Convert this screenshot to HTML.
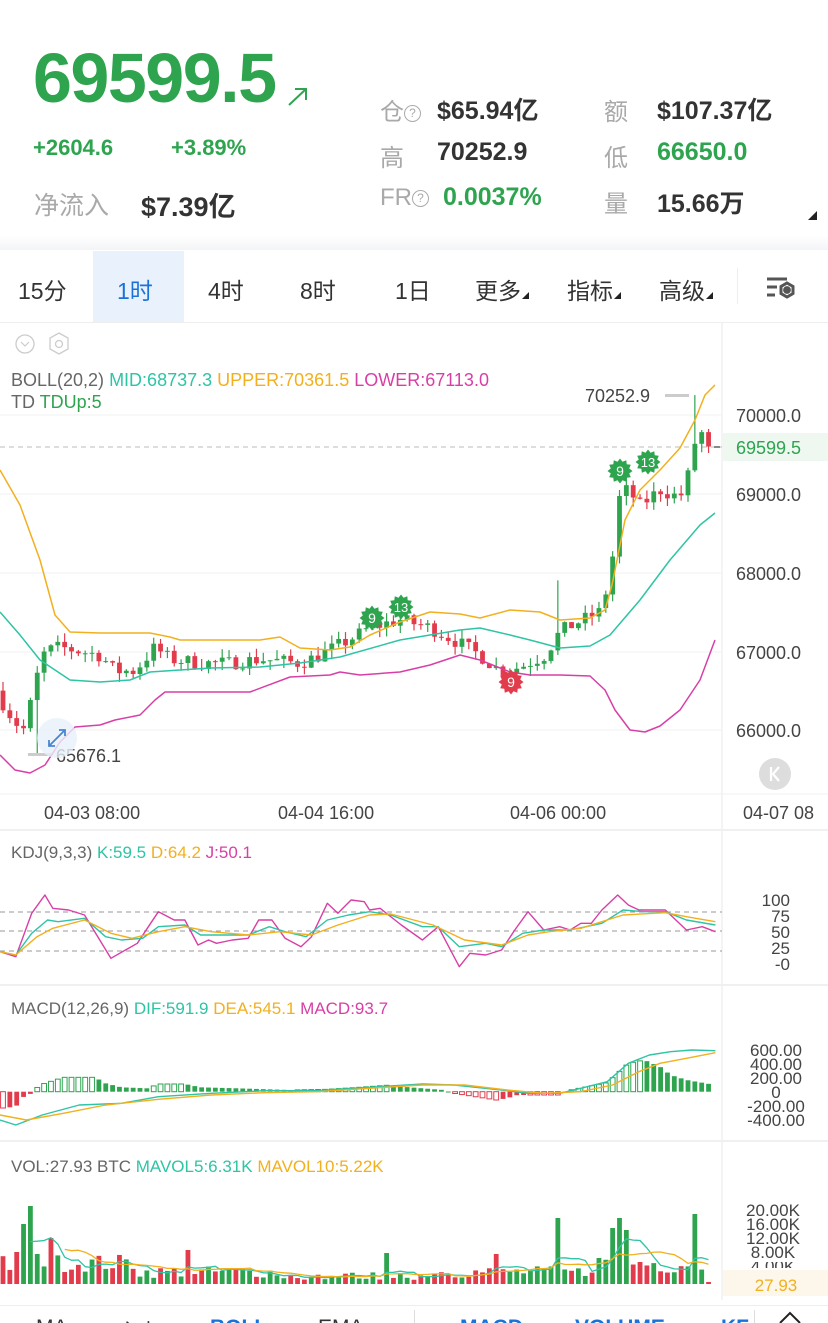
<!DOCTYPE html>
<html><head><meta charset="utf-8">
<style>
*{margin:0;padding:0;box-sizing:border-box}
body{width:828px;height:1323px;overflow:hidden;background:#fff;font-family:"Liberation Sans","Noto Sans CJK SC",sans-serif;position:relative}
.a{position:absolute;white-space:nowrap}
.g{color:#2ea44f}
.gray{color:#a9a9a9}
.dk{color:#333}
.b{font-weight:bold}
.tab{position:absolute;top:272px;font-size:23px;color:#333}
.tri{display:inline-block;width:0;height:0;border-left:7px solid transparent;border-bottom:7px solid #222;margin-left:1px}
.q{display:inline-block;width:17px;height:17px;border:1.5px solid #aaa;border-radius:50%;font-size:12px;line-height:14px;text-align:center;color:#aaa;vertical-align:3px;font-weight:normal}
</style></head><body>
<div class="a g b" style="left:33px;top:38px;font-size:70px;letter-spacing:-1.5px">69599.5</div>
<svg class="a" style="left:286px;top:86px" width="24" height="22"><path d="M3 19 L20 3 M9 3 H20 V14" stroke="#2ea44f" stroke-width="2" fill="none"/></svg>
<div class="a g b" style="left:33px;top:135px;font-size:22px">+2604.6</div>
<div class="a g b" style="left:171px;top:135px;font-size:22px">+3.89%</div>
<div class="a gray" style="left:34px;top:186px;font-size:25px">净流入</div>
<div class="a dk b" style="left:141px;top:185px;font-size:27px">$7.39亿</div>

<div class="a gray" style="left:380px;top:92px;font-size:24px">仓<span class="q">?</span></div>
<div class="a dk b" style="left:437px;top:91px;font-size:25px">$65.94亿</div>
<div class="a gray" style="left:604px;top:92px;font-size:24px">额</div>
<div class="a dk b" style="left:657px;top:91px;font-size:25px">$107.37亿</div>
<div class="a gray" style="left:380px;top:138px;font-size:24px">高</div>
<div class="a dk b" style="left:437px;top:138px;font-size:25px">70252.9</div>
<div class="a gray" style="left:604px;top:138px;font-size:24px">低</div>
<div class="a g b" style="left:657px;top:138px;font-size:25px">66650.0</div>
<div class="a gray" style="left:380px;top:184px;font-size:24px">FR<span class="q">?</span></div>
<div class="a g b" style="left:443px;top:183px;font-size:25px">0.0037%</div>
<div class="a gray" style="left:604px;top:184px;font-size:24px">量</div>
<div class="a dk b" style="left:657px;top:184px;font-size:25px">15.66万</div>
<div class="a" style="left:808px;top:211px;width:0;height:0;border-left:9px solid transparent;border-bottom:9px solid #222"></div>

<div class="a" style="left:0;top:236px;width:828px;height:14px;background:linear-gradient(#fff,#f3f4f6)"></div>
<div class="a" style="left:93px;top:251px;width:91px;height:72px;background:#e9f2fc"></div>
<div class="tab" style="left:18px">15分</div>
<div class="tab" style="left:117px;color:#1a72d8">1时</div>
<div class="tab" style="left:208px">4时</div>
<div class="tab" style="left:300px">8时</div>
<div class="tab" style="left:395px">1日</div>
<div class="tab" style="left:475px">更多<span class="tri"></span></div>
<div class="tab" style="left:567px">指标<span class="tri"></span></div>
<div class="tab" style="left:659px">高级<span class="tri"></span></div>
<div class="a" style="left:737px;top:268px;width:1px;height:36px;background:#eee"></div>
<svg class="a" style="left:765px;top:275px" width="34" height="28"><g stroke="#555" stroke-width="3" fill="none"><path d="M2 4 H22 M2 12 H12 M2 20 H10"/><polygon points="22,8 28,11.5 28,18.5 22,22 16,18.5 16,11.5"/><circle cx="22" cy="15" r="2.4" fill="#555"/></g></svg>
<div class="a" style="left:0;top:322px;width:828px;height:1px;background:#eee"></div>

<svg id="ch" class="a" style="left:0;top:0" width="828" height="1323" font-family="Liberation Sans, sans-serif"></svg>
<div class="a" style="left:0;top:1305px;width:828px;height:18px;border-top:1px solid #eee;background:#fff;overflow:hidden">
<div class="a" style="left:36px;top:10px;font-size:21px;color:#333">MA</div>
<div class="a" style="left:118px;top:10px;font-size:21px;color:#333">主力</div>
<div class="a b" style="left:210px;top:10px;font-size:21px;color:#1a72d8">BOLL</div>
<div class="a" style="left:318px;top:10px;font-size:21px;color:#333">EMA</div>
<div class="a" style="left:414px;top:4px;width:1px;height:20px;background:#ddd"></div>
<div class="a b" style="left:460px;top:10px;font-size:21px;color:#1a72d8">MACD</div>
<div class="a b" style="left:575px;top:10px;font-size:21px;color:#1a72d8">VOLUME</div>
<div class="a b" style="left:721px;top:10px;font-size:21px;color:#1a72d8">KF</div>
<div class="a" style="left:754px;top:4px;width:1px;height:20px;background:#ddd"></div>
<svg class="a" style="left:778px;top:4px" width="24" height="14"><path d="M2 13 L12 3 L22 13" stroke="#222" stroke-width="2" fill="none"/></svg>
</div>

<script>
var S=document.getElementById('ch'),out='';
function ln(x1,y1,x2,y2,c,w,d){out+='<line x1="'+x1+'" y1="'+y1+'" x2="'+x2+'" y2="'+y2+'" stroke="'+c+'" stroke-width="'+(w||1)+'"'+(d?' stroke-dasharray="'+d+'"':'')+'/>';}
function rc(x,y,w,h,c,hol){out+='<rect x="'+x+'" y="'+y+'" width="'+w+'" height="'+Math.max(h,1)+'" '+(hol?'fill="#fff" stroke="'+c+'" stroke-width="1"':'fill="'+c+'"')+'/>';}
function tx(x,y,t,c,s,anc){out+='<text x="'+x+'" y="'+y+'" fill="'+c+'" font-size="'+s+'"'+(anc?' text-anchor="'+anc+'"':'')+'>'+t+'</text>';}
function pl(p,c,w){out+='<polyline points="'+p.map(function(a){return a[0].toFixed(1)+','+a[1].toFixed(1)}).join(' ')+'" fill="none" stroke="'+c+'" stroke-width="'+(w||1.6)+'" stroke-linejoin="round"/>';}
function interp(p,x){if(x<=p[0][0])return p[0][1];for(var i=1;i<p.length;i++){if(x<=p[i][0]){var t=(x-p[i-1][0])/(p[i][0]-p[i-1][0]);return p[i-1][1]+t*(p[i][1]-p[i-1][1]);}}return p[p.length-1][1];}
function Z(a,y0){return a.map(function(q){return [q[0]/1.894,y0+q[1]/3];});}
var G='#2ea44f',R='#e23b4b',T='#2ec4a5',Y='#f2b01e',M='#d83fa6';
var seed=7;function rnd(){seed=(seed*16807)%2147483647;return seed/2147483647;}
ln(722,323,722,1300,'#f0f0f0',1.5);
ln(0,794,828,794,'#f0f0f0',1);ln(0,830,828,830,'#f0f0f0',2);ln(0,985,828,985,'#f0f0f0',2);ln(0,1141,828,1141,'#f0f0f0',2);
[415,494,573,652,730].forEach(function(y){ln(0,y,722,y,'#f1f1f1',1);});
out+='<circle cx="25" cy="344" r="9" fill="none" stroke="#ccc" stroke-width="1.3"/><path d="M21 342 L25 346 L29 342" stroke="#ccc" fill="none" stroke-width="1.2"/>';
out+='<polygon points="59,333 68,338 68,349 59,354 50,349 50,338" fill="none" stroke="#ccc" stroke-width="1.3"/><circle cx="59" cy="344" r="3.5" fill="none" stroke="#ccc" stroke-width="1.3"/>';
out+='<text x="11" y="386" font-size="18"><tspan fill="#666">BOLL(20,2) </tspan><tspan fill="'+T+'">MID:68737.3 </tspan><tspan fill="'+Y+'">UPPER:70361.5 </tspan><tspan fill="'+M+'">LOWER:67113.0</tspan></text>';
out+='<text x="11" y="408" font-size="18"><tspan fill="#666">TD </tspan><tspan fill="'+G+'">TDUp:5</tspan></text>';
[['70000.0',415],['69000.0',494],['68000.0',573],['67000.0',652],['66000.0',730]].forEach(function(a){tx(736,a[1]+7,a[0],'#444',18);});
rc(723,433,105,28,'#eef8f1');tx(736,454,'69599.5',G,18);
ln(0,447,722,447,'#bbb',1,'5,4');ln(714,447,720,447,'#888',2);
function py(p){return 415+(70000-p)*0.07875;}
var path=[[0,66400],[15,66100],[25,66000],[35,66600],[45,67000],[60,67050],[100,66950],[115,66750],[135,66750],[155,67050],[170,66900],[200,66850],[230,66850],[260,66900],[300,66850],[320,66950],[350,67150],[370,67300],[400,67400],[430,67300],[460,67100],[480,66950],[500,66750],[520,66800],[545,66950],[560,67250],[575,67350],[600,67500],[607,67800],[614,68300],[620,69000],[628,69050],[640,68850],[660,69050],[680,68950],[690,69300],[697,69800],[704,69750],[712,69600]];
var N=104,sp=6.85,vols=[],cols=[];
var prev=66500;
for(var i=0;i<N;i++){var x=3+i*sp;var c=interp(path,x)+(rnd()-0.5)*180;if(i==N-1)c=69599.5;var o=prev;var hi=Math.max(o,c)+rnd()*120,lo=Math.min(o,c)-rnd()*120;
if(i==5){lo=65676;}
if(i==101){hi=70252.9;}
if(i==81){hi=67900;}
var col=c>=o?G:R;cols.push(col);
ln(x,py(hi),x,py(lo),col,1.2);rc(x-2.4,py(Math.max(o,c)),4.8,Math.abs(py(o)-py(c)),col);prev=c;}
rc(665,394,24,3,'#ccc');tx(585,402,'70252.9','#444',18);
rc(28,753,24,3,'#ccc');tx(56,762,'65676.1','#444',18);
pl([[0,470],[20,505],[40,560],[55,615],[70,632],[100,633],[150,633],[170,637],[180,640],[260,640],[280,637],[300,648],[330,650],[350,647],[370,635],[400,622],[430,612],[460,614],[480,618],[510,610],[540,612],[560,620],[590,618],[605,610],[612,585],[625,520],[640,490],[660,470],[680,448],[695,420],[705,395],[715,385]],Y,1.5);
pl([[0,612],[20,635],[40,660],[70,680],[100,682],[130,680],[150,672],[180,670],[210,668],[260,667],[300,663],[340,657],[400,640],[430,635],[460,630],[480,628],[510,635],[530,640],[560,648],[590,646],[610,635],[640,600],[670,560],[700,525],[715,513]],T,1.5);
pl([[0,755],[15,770],[30,773],[45,765],[60,742],[75,727],[100,725],[115,720],[140,715],[155,700],[165,692],[180,692],[250,692],[290,677],[330,675],[340,672],[360,675],[400,672],[430,665],[460,655],[480,660],[510,672],[530,675],[560,675],[590,676],[605,690],[615,710],[630,730],[645,732],[660,726],[680,710],[700,680],[715,640]],M,1.5);
function star(cx,cy,t,c){var p=[];for(var k=0;k<24;k++){var r=k%2?9.5:12.5,a=Math.PI*k/12;p.push((cx+r*Math.sin(a)).toFixed(1)+','+(cy-r*Math.cos(a)).toFixed(1));}out+='<polygon points="'+p.join(' ')+'" fill="'+c+'"/>';tx(cx,cy+5,t,'#fff',t.length>1?13:14,'middle');}
star(372,618,'9',G);star(401,607,'13',G);star(620,471,'9',G);star(648,462,'13',G);star(511,682,'9',R);
out+='<circle cx="57" cy="738" r="20" fill="#e8f0fa" opacity="0.8"/><path d="M49 746 L65 730 M59 730 H65 V736 M49 740 V746 H55" stroke="#4a86d0" stroke-width="1.8" fill="none"/>';
out+='<circle cx="775" cy="774" r="16" fill="#ddd"/><path d="M771 767 V781 M779 767 L773 774 L779 781" stroke="#fff" stroke-width="2.2" fill="none"/>';
[['04-03 08:00',44],['04-04 16:00',278],['04-06 00:00',510],['04-07 08',743]].forEach(function(a){tx(a[1],819,a[0],'#444',18);});
out+='<text x="11" y="858" font-size="17"><tspan fill="#666">KDJ(9,3,3) </tspan><tspan fill="'+T+'">K:59.5 </tspan><tspan fill="'+Y+'">D:64.2 </tspan><tspan fill="'+M+'">J:50.1</tspan></text>';
[912,931,951].forEach(function(y){ln(0,y,722,y,'#999',1,'5,4');});
[['100',906],['75',922],['50',938],['25',954],['-0',970]].forEach(function(a){tx(790,a[1],a[0],'#444',17,'end');});
pl(Z([[0,365],[30,380],[60,250],[85,195],[100,235],[130,240],[160,255],[210,385],[260,340],[300,245],[330,270],[350,270],[375,345],[395,330],[410,340],[440,330],[470,325],[490,270],[515,270],[540,325],[570,350],[590,320],[620,220],[640,250],[665,210],[690,215],[700,240],[720,235],[760,285],[800,330],[830,290],[870,410],[890,370],[920,375],[950,360],[975,300],[1000,245],[1030,300],[1060,290],[1080,300],[1100,280],[1120,280],[1140,240],[1170,195],[1190,225],[1210,240],[1260,240],[1300,300],[1330,290],[1355,305]],830),M,1.4);
pl(Z([[0,365],[30,375],[60,310],[90,270],[110,275],[160,265],[200,320],[230,330],[270,325],[300,290],[350,285],[380,315],[420,315],[470,315],[510,290],[540,305],[580,320],[620,270],[660,255],[700,245],[740,255],[800,290],[830,290],[870,350],[920,340],[950,350],[990,310],[1030,300],[1080,300],[1140,280],[1180,240],[1220,245],[1260,245],[1300,270],[1355,285]],830),T,1.4);
pl(Z([[0,365],[30,375],[70,320],[100,295],[160,270],[210,310],[250,325],[300,305],[350,290],[400,305],[470,315],[530,305],[590,315],[640,285],[700,255],[740,252],[820,285],[880,330],[950,345],[1000,315],[1040,305],[1100,295],[1180,255],[1260,248],[1300,260],[1355,275]],830),Y,1.4);
out+='<text x="11" y="1014" font-size="17"><tspan fill="#666">MACD(12,26,9) </tspan><tspan fill="'+T+'">DIF:591.9 </tspan><tspan fill="'+Y+'">DEA:545.1 </tspan><tspan fill="'+M+'">MACD:93.7</tspan></text>';
[['600.00',1056],['400.00',1070],['200.00',1084],['0',1098],['-200.00',1112],['-400.00',1126]].forEach(function(a){tx(776,a[1],a[0],'#444',17,'middle');});
var hist=[[0,835],[30,830],[45,800],[60,790],[75,765],[120,742],[180,742],[200,760],[230,772],[280,775],[300,762],[350,762],[380,772],[450,775],[550,780],[620,778],[680,772],[740,765],[760,770],[840,780],[860,790],[940,810],[960,805],[980,795],[1060,795],[1080,780],[1150,758],[1190,700],[1220,690],[1250,710],[1270,735],[1300,750],[1355,765]];
var z0=1091.7,pv=0;
for(var i=0;i<N;i++){var x=3+i*sp;var v=z0-(830+interp(hist,x*1.894)/3);var col=v>=0?G:R;var hol=Math.abs(v)>=Math.abs(pv);
rc(x-2.4,v>=0?z0-v:z0,4.8,Math.abs(v),col,hol);pv=v;}
pl(Z([[0,870],[30,885],[80,855],[150,825],[230,820],[300,800],[400,790],[500,782],[600,782],[700,772],[800,762],[860,765],[950,780],[1000,790],[1060,790],[1100,775],[1150,755],[1190,700],[1230,675],[1270,665],[1310,660],[1355,662]],830),T,1.4);
pl(Z([[0,855],[50,870],[120,850],[200,825],[300,808],[400,795],[500,788],[600,785],[700,775],[800,765],[880,765],[960,780],[1030,790],[1100,785],[1160,765],[1210,725],[1250,700],[1300,685],[1355,668]],830),Y,1.4);
out+='<text x="11" y="1172" font-size="17"><tspan fill="#666">VOL:27.93 BTC </tspan><tspan fill="'+T+'">MAVOL5:6.31K </tspan><tspan fill="'+Y+'">MAVOL10:5.22K</tspan></text>';
[['20.00K',1216],['16.00K',1230],['12.00K',1244],['8.00K',1258]].forEach(function(a){tx(773,a[1],a[0],'#444',17,'middle');});
out+='<clipPath id="cp"><rect x="723" y="1262" width="105" height="6"/></clipPath><text x="773" y="1272" font-size="17" fill="#444" text-anchor="middle" clip-path="url(#cp)">4.00K</text>';
rc(723,1270,105,26,'#fdf6ea');tx(776,1291,'27.93',Y,17,'middle');
var spikes={2:[32,R],3:[60,G],4:[78,G],5:[30,G],7:[46,R],27:[34,R],56:[31,G],72:[30,R],81:[66,G],89:[56,G],90:[66,G],91:[54,G],101:[70,G]};
var base=1284;
for(var i=0;i<N;i++){var x=3+i*sp;var h,col=cols[i];
if(spikes[i]){h=spikes[i][0];col=spikes[i][1];}else{h=(i<20?12+rnd()*18:(i>85?10+rnd()*22:6+rnd()*12));if(i>=40&&i<62)h=4+rnd()*8;}
if(i==103)h=2;vols.push(h);
rc(x-2.4,base-h,4.8,h,col);}
function ma(n){var p=[];for(var i=n-1;i<N;i++){var s=0;for(var k=0;k<n;k++)s+=vols[i-k];p.push([3+i*sp,base-s/n]);}return p;}
pl(ma(5),T,1.3);pl(ma(10),Y,1.3);
S.innerHTML=out;
</script>
</body></html>
